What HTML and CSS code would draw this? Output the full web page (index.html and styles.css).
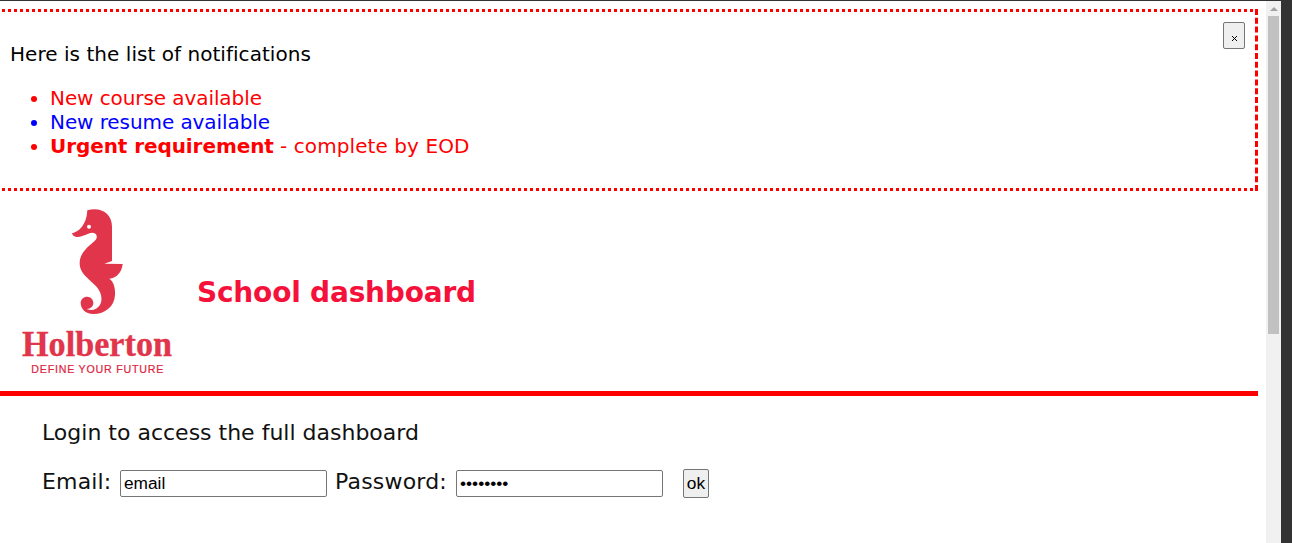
FILE: index.html
```
<!DOCTYPE html>
<html lang="en">
<head>
<meta charset="utf-8">
<title>School dashboard</title>
<link rel="stylesheet" href="styles.css">
</head>
<body>
<div class="window">
  <div class="page">
    <section class="notifications">
      <div class="notice-text">
        <p class="notice-title">Here is the list of notifications</p>
        <ul class="notice-list">
          <li>New course available</li>
          <li class="default">New resume available</li>
          <li><strong>Urgent requirement</strong> <span class="deadline">- complete by EOD</span></li>
        </ul>
      </div>
      <button class="close" aria-label="Close"><svg width="5" height="5" viewBox="0 0 5 5" shape-rendering="crispEdges"><path d="M0 0h1v1H0zM4 0h1v1H4zM1 1h1v1H1zM3 1h1v1H3zM2 2h1v1H2zM1 3h1v1H1zM3 3h1v1H3zM0 4h1v1H0zM4 4h1v1H4z"/></svg></button>
    </section>
    <header class="header">
      <svg class="logo" viewBox="0 0 540 555" fill="#e1354b">
        <path d="M232 31C270 20 306 38 306 80V183L283 191L338 192C336 215 320 235 298 236C312 245 316 265 315 285C313 320 285 342 250 342C225 342 212 325 212 308C212 298 221 290 231 290C243 290 250 299 250 309C250 319 243 326 230 327C240 331 250 331 258 326C275 317 276 300 273 285C268 262 245 248 230 232C215 217 209 205 209 190C209 165 225 148 240 135C255 123 262 118 260 107C257 97 245 97 235 101C220 106 210 112 200 111C192 110 187 106 186 100C205 97 230 75 232 31Z"/>
        <circle cx="237" cy="80" r="6" fill="#fff"/>
        <text class="brand" x="36" y="468" textLength="450" lengthAdjust="spacingAndGlyphs">Holberton</text>
        <text class="tagline" x="64" y="518" textLength="396">DEFINE YOUR FUTURE</text>
      </svg>
      <h1 class="title">School dashboard</h1>
    </header>
    <main class="login">
      <p class="intro">Login to access the full dashboard</p>
      <form class="form">
        <label class="label email-label" for="email">Email:</label>
        <input id="email" class="field email" type="text" value="email">
        <label class="label password-label" for="password">Password:</label>
        <input id="password" class="field password" type="password" value="password">
        <button class="ok" type="button">ok</button>
      </form>
    </main>
  </div>
  <div class="scrollbar"><i class="arrow"></i><div class="thumb"></div></div>
</div>
</body>
</html>
```
FILE: styles.css
```
* { box-sizing: border-box; }
body { margin: 0; background: #333; overflow: hidden; font-family: "DejaVu Sans", Verdana, sans-serif; color: #000; }
.window { display: flex; width: 1281px; height: 543px; background: #fff; border-top: 1px solid #333; }
.page { width: 1258px; margin-right: 8px; padding-top: 8px; }
.notifications {
  display: flex; justify-content: space-between; align-items: flex-start;
  height: 182px; padding: 13px 10px 0; border-right: 3px dashed #f00;
  background-image: repeating-linear-gradient(90deg, #f00 0 3px, transparent 3px 6px), repeating-linear-gradient(90deg, #f00 0 3px, transparent 3px 6px);
  background-size: 1256px 3px; background-position: 2px 0, 2px 100%; background-repeat: no-repeat;
}
.notice-title { margin: 20px 0 20px; font-size: 20px; line-height: 24px; letter-spacing: 0.04px; }
.notice-list { margin: 0; padding-left: 40px; font-size: 20px; line-height: 24px; letter-spacing: -0.08px; color: #f00; }
.default { color: #00f; }
.deadline { letter-spacing: 0.08px; }
.close { width: 22px; height: 27px; padding: 6px 0 0; display: flex; align-items: center; justify-content: center; border: 1px solid #767676; border-radius: 2px; background: #efefef; }
.header { display: flex; align-items: center; height: 205px; border-bottom: 5px solid #f00; }
.logo { width: 180px; height: 185px; margin: 3px 7px 0 10px; flex: none; }
.brand { font: bold 108px "Liberation Serif", serif; stroke: #e1354b; stroke-width: 1px; }
.tagline { font: 32px "Liberation Sans", sans-serif; fill: #dd2540; stroke: #dd2540; stroke-width: 0.6px; }
.title { margin: 4px 0 0; font-size: 28px; line-height: 34px; letter-spacing: -0.2px; color: #f5113a; }
.login { padding: 23px 0 0 42px; font-size: 22px; color: #111; }
.intro { margin: 0; line-height: 27px; }
.form { display: flex; align-items: center; margin-top: 22px; height: 30px; }
.label { padding-bottom: 4px; flex: none; }
.email-label { width: 70px; letter-spacing: 0.15px; }
.password-label { width: 112px; letter-spacing: 0.2px; }
.field { width: 207px; height: 27px; padding: 1px 3px; border: 1px solid #767676; border-radius: 2px; font: 17.3px "Liberation Sans", sans-serif; background: #fff; color: #000; }
.email { margin: 0 8px; }
.password { margin: 0 20px 0 9px; }
.ok { width: 26px; height: 29px; padding: 1px 0 0; border: 1px solid #767676; border-radius: 2px; background: #efefef; font: 17.3px "Liberation Sans", sans-serif; color: #000; }
.scrollbar { width: 15px; background: #f1f1f1; display: flex; flex-direction: column; align-items: center; }
.arrow { margin-top: 6px; border: 4px solid transparent; border-top: 0; border-bottom: 4px solid #a3a3a3; }
.thumb { width: 11px; height: 318px; margin-top: 5px; background: #c1c1c1; }
```
